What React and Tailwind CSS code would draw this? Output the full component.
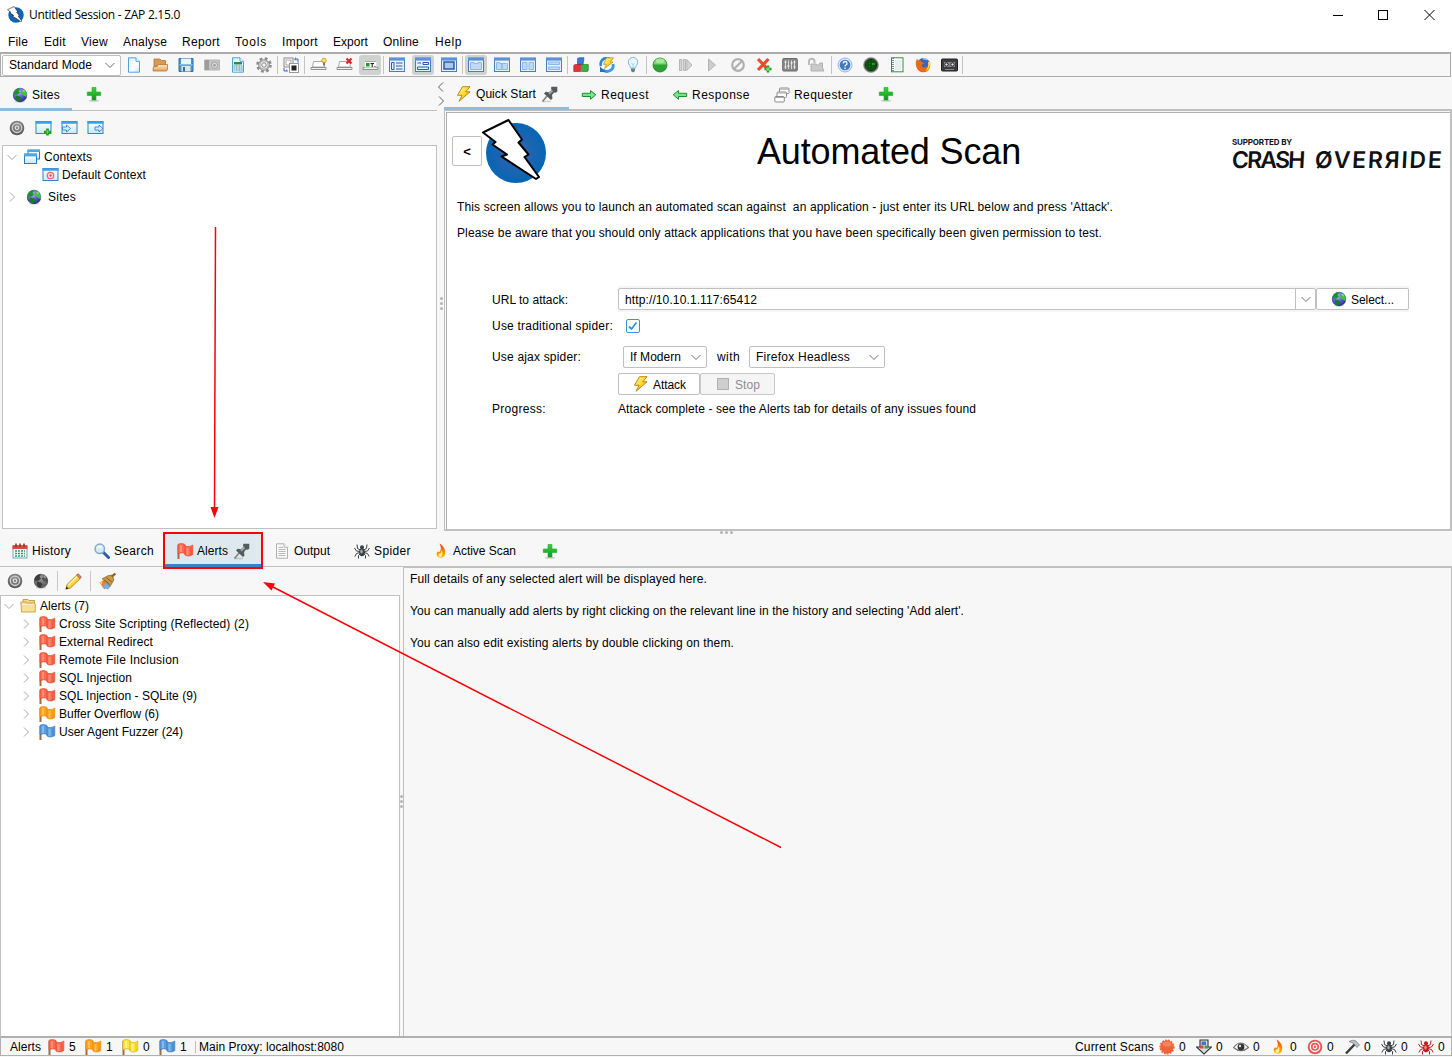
import React, { useLayoutEffect, useRef } from "react";

/* A label whose letters are spaced to fill the width in w. */
function T({ w, children, className = "" }) {
  const ref = useRef(null);
  useLayoutEffect(() => {
    const el = ref.current;
    el.style.letterSpacing = "0px";
    const natural = el.getBoundingClientRect().width;
    el.style.letterSpacing = `${(w - natural) / el.textContent.length}px`;
  }, [w, children]);
  return (
    <span ref={ref} className={"inline-block w-max shrink-0 whitespace-pre " + className}>
      {children}
    </span>
  );
}

function I({ children, className = "h-4 w-4", vb = "0 0 16 16" }) {
  return (
    <svg viewBox={vb} className={"block shrink-0 " + className} fill="none">
      {children}
    </svg>
  );
}

const Defs = () => (
  <svg className="absolute h-0 w-0">
    <defs>
      <linearGradient id="gold" x1="0" y1="0" x2="1" y2="1">
        <stop offset="0" stopColor="#fffbb0" /><stop offset=".5" stopColor="#ffd92e" /><stop offset="1" stopColor="#e69a00" />
      </linearGradient>
      <linearGradient id="green" x1="0" y1="0" x2="0" y2="1">
        <stop offset="0" stopColor="#3fd23f" /><stop offset="1" stopColor="#0d9a1c" />
      </linearGradient>
      <linearGradient id="win" x1="0" y1="0" x2="0" y2="1">
        <stop offset="0" stopColor="#ffffff" /><stop offset="1" stopColor="#cfe6f8" />
      </linearGradient>
      <linearGradient id="page" x1="0" y1="0" x2="1" y2="1">
        <stop offset="0" stopColor="#d5ecfb" /><stop offset=".6" stopColor="#ffffff" /><stop offset="1" stopColor="#c8e5f8" />
      </linearGradient>
      <linearGradient id="folder" x1="0" y1="0" x2="0" y2="1">
        <stop offset="0" stopColor="#ffe9c2" /><stop offset="1" stopColor="#e0a45c" />
      </linearGradient>
      <radialGradient id="globe" cx=".4" cy=".3" r=".75">
        <stop offset="0" stopColor="#b4b6fa" /><stop offset=".5" stopColor="#5c5ed2" /><stop offset="1" stopColor="#24248a" />
      </radialGradient>
      <radialGradient id="graydisc" cx=".5" cy=".3" r=".8">
        <stop offset="0" stopColor="#9a9a9a" /><stop offset="1" stopColor="#4c4c4c" />
      </radialGradient>
      <radialGradient id="zap" cx=".5" cy=".5" r=".5">
        <stop offset="0" stopColor="#3a62ac" /><stop offset="1" stopColor="#0666b4" />
      </radialGradient>
      <linearGradient id="flame" x1="0" y1="0" x2="0" y2="1">
        <stop offset="0" stopColor="#e8420c" /><stop offset=".6" stopColor="#ff8a00" /><stop offset="1" stopColor="#ffc400" />
      </linearGradient>
    </defs>
  </svg>
);

const ZapLogo = ({ className }) => (
  <I className={className} vb="0 0 66 66">
    <circle cx="35" cy="35" r="30" fill="url(#zap)" />
    <path d="M2 14.500 27.500 2 41 21.500 37.500 24.500 47.500 36.500 43.500 39 58 59 55 61 20.500 38.500 26 36.500 11.500 26.500 14.500 24Z" fill="#fff" stroke="#000" strokeWidth="2" strokeLinejoin="round" />
  </I>
);
const Globe = ({ gray, className }) => (
  <I className={className}>
    <ellipse cx="8" cy="14.600" rx="5" ry="1" fill="#000" opacity=".18" />
    <circle cx="8" cy="8" r="7.200" fill={gray ? "url(#graydisc)" : "url(#globe)"} />
    <path d="M2 4.500C4 1.500 6.500 1 8 1.500L6.500 4 8 5.500 5.500 7.500 3.500 8 1.200 7Z" fill={gray ? "#3c3c3c" : "#1f9426"} />
    <path d="M9.500 2 13 3.500 15 7 14.500 10 12.500 9 10 7.500 8.500 5.500 10.500 4Z" fill={gray ? "#555" : "#43c238"} />
    <path d="M4 8.500 8 9.500 9.500 11.500 7.500 14.800 5 14 4 11Z" fill={gray ? "#3c3c3c" : "#187c1c"} />
    <path d="M10 2.500 12.500 3.500 13 5.500 11 4.500Z" fill={gray ? "#bbb" : "#a4ec88"} opacity=".8" />
  </I>
);
const Plus = () => (
  <I>
    <ellipse cx="8" cy="14.700" rx="5" ry="1" fill="#000" opacity=".18" />
    <path d="M6 1.500H10V6H14.700V9.500H10V14H6V9.500H1.300V6H6Z" fill="url(#green)" stroke="#22a82b" strokeWidth=".6" />
  </I>
);
const Bolt = () => (
  <I>
    <path d="M6.500.7H14L9.800 5.800H14L3 15.300 6 9.300H1.500Z" fill="url(#gold)" stroke="#b97a05" strokeWidth=".9" strokeLinejoin="round" />
  </I>
);
const Pin = () => (
  <I className="h-[17px] w-[17px]" vb="0 0 17 17">
    <path d="M6.500 9.500 1.500 15.500" stroke="#888" strokeWidth="1.800" />
    <path d="M10.500.8 16.300.8 16.300 5.800 14.500 6.700 13 6.500 11 9 11.500 12.500 10 14 3 7.500 4.700 5.800 8 6.200 10.500 4 10 2Z" fill="#555a5c" />
    <path d="M11.500 4.500 8 7.800" stroke="#a5aaac" strokeWidth="1.800" />
    <path d="M1.500 15.500H10" stroke="#000" opacity=".15" strokeWidth="1.500" />
  </I>
);
const Arrow = ({ left }) => (
  <I className={left ? "h-4 w-4 -scale-x-100" : "h-4 w-4"}>
    <path d="M1.300 6.300H9.500V3.500L14.800 7.800 9.500 12.300V9.500H1.300Z" fill="#7fe08a" stroke="#169427" strokeWidth="1" strokeLinejoin="round" />
  </I>
);
const Stack = ({ gray }) => {
  const s = gray ? "#8b8b8b" : "#1b83c9";
  return (
    <I>
      {gray && <><rect x="5.500" y="1" width="9.500" height="5.500" rx="1" fill="#fff" stroke={s} /><rect x="3" y="5" width="9.500" height="5.500" rx="1" fill="#fff" stroke={s} /><rect x=".8" y="9.500" width="9.500" height="5.500" rx="1" fill="#fff" stroke={s} /><path d="M6 2.200H15M3.500 6H12M1 10.500H10" stroke="#aaa" /></>}
      {!gray && <><rect x="4" y="1" width="11.500" height="9" fill="url(#win)" stroke={s} /><path d="M3.500 2H16" stroke="#46a9e8" strokeWidth="2" /><rect x=".5" y="5" width="12" height="9.500" fill="url(#win)" stroke={s} /><path d="M0 6.200H13" stroke="#46a9e8" strokeWidth="2.400" /></>}
    </I>
  );
};
const Win = ({ kind }) => (
  <I className="h-4 w-[17px]" vb="0 0 17 16">
    <rect x="1" y="1.500" width="15" height="12" fill="url(#win)" stroke="#2989cb" />
    <path d="M.5 2.500H16.500" stroke="#3da0e2" strokeWidth="2.500" />
    {kind === "add" && <><path d="M12.500 8.500V15.500M9 12H16" stroke="#149a20" strokeWidth="2.600" /><path d="M12.500 10V14M10.500 12H14.500" stroke="#6fe070" strokeWidth=".8" /></>}
    {kind === "in" && <path d="M1.500 7H5.500V5L9.500 8.500 5.500 12V10H1.500Z" fill="#d8efff" stroke="#2989cb" strokeWidth=".9" />}
    {kind === "out" && <path d="M8 7H12V5L15.800 8.500 12 12V10H8Z" fill="#d8efff" stroke="#2989cb" strokeWidth=".9" />}
    {kind === "target" && <><circle cx="8.500" cy="8.500" r="3.200" stroke="#f26a6a" strokeWidth="1.300" fill="#ffe5e5" /><circle cx="8.500" cy="8.500" r="1.200" fill="#f04e4e" /></>}
  </I>
);
const Target = ({ red }) => (
  <I>
    <circle cx="8" cy="8" r="7.300" fill={red ? "#e85a5a" : "url(#graydisc)"} />
    <circle cx="8" cy="7.800" r="4.700" stroke={red ? "#fff" : "#d0d0d0"} strokeWidth="1.300" />
    <circle cx="8" cy="7.800" r="1.800" stroke={red ? "#fff" : "#dedede"} strokeWidth="1.200" />
  </I>
);
const flagColors = {
  red: ["#ff6a50", "#dd3a22", "#ff9e88"],
  orange: ["#ffa51a", "#dd7d00", "#ffcb70"],
  yellow: ["#ffe63d", "#c9a600", "#fff7a0"],
  blue: ["#5c9ede", "#2b6cb4", "#96c5f0"],
};
const Flag = ({ c }) => {
  const [a, b, h] = flagColors[c];
  return (
    <I className="h-[17px] w-[17px]" vb="0 0 17 17">
      <path d="M1.500 2V16" stroke="#a06c40" strokeWidth="2" />
      <path d="M1 1.300C3.500.3 5.500.3 8 1.500V3C10.500 4 13 3.800 15.800 2V11.500C13 13.500 10 13.300 8 12V10.500C5.500 9.500 3.500 9.700 1 10.800Z" fill={a} stroke={b} strokeWidth=".6" />
      <path d="M4 2V9M10.500 5V12" stroke={h} strokeWidth="2" opacity=".7" />
      <path d="M8 2V11.500M14 4V12" stroke={b} strokeWidth="1" opacity=".6" />
    </I>
  );
};
const Spider = ({ red }) => {
  const s = red ? "#bf1d1d" : "#3a4045";
  return (
    <I>
      <path d="M6.500 7 3.500 5.500 3 1.500M6 8.500 2.500 8 .5 5M6 9.500 2.500 10.500.8 13.500M6.500 10.500 4.500 12.500 4.500 15.500M9.500 7 12.500 5.500 13 1.500M10 8.500 13.500 8 15.500 5M10 9.500 13.500 10.500 15.200 13.500M9.500 10.500 11.500 12.500 11.500 15.500" stroke={s} strokeWidth="1" />
      <circle cx="8" cy="4.200" r="2" fill={s} />
      <ellipse cx="8" cy="9.300" rx="2.800" ry="4" fill={s} />
      <ellipse cx="7.500" cy="8.500" rx="1.200" ry="2" fill={red ? "#ff8b8b" : "#a4aeb4"} />
    </I>
  );
};
const Flame = () => (
  <I>
    <path d="M6.500.5C11 3 13 7 12 11.500 11 15.500 5 16 3.800 12 3 9 5.500 7.500 6.500 9 8.500 7 8 3.500 6.500.5Z" fill="url(#flame)" />
    <path d="M8.800 7C10 10 9.500 13.500 7.500 14 5.500 14 5 11.800 6 10.500 7.500 11 8.500 9 8.800 7Z" fill="#fff3a0" />
  </I>
);
const Page = ({ kind }) => {
  const s = kind === "text" ? "#b0b0b0" : "#4ea4d8";
  return (
    <I>
      <path d="M2.500.8H10L13.500 4.300V15.200H2.500Z" fill={kind === "text" ? "#fafafa" : "url(#page)"} stroke={s} />
      <path d="M10 .8V4.300H13.500" fill="#fff" stroke={s} />
      {kind === "text" && <path d="M4.500 4.500H9M4.500 6.500H11.500M4.500 8.500H11.500M4.500 10.500H11.500M4.500 12.500H11.500" stroke="#b7b7b7" />}
      {kind === "report" && <><rect x="4" y="5" width="8" height="2.500" fill="#149a48" /><path d="M4 9H12M4 11H12M4 13H12M6.700 8V14M9.300 8V14M4 8V14M12 8V14" stroke="#7fa8b8" strokeWidth=".8" /></>}
    </I>
  );
};
const Layout = ({ kind }) => (
  <I>
    <rect x=".5" y="1" width="15" height="13.500" fill="#e6f0fb" stroke="#4a7cc0" />
    <path d="M0 2.300H16" stroke="#5a93d8" strokeWidth="2.600" />
    {kind === 1 && <path d="M2.500 5.500H5V12.500H2.500ZM7 6H13.500M7 9H13.500M7 12H13.500" stroke="#2a5da8" />}
    {kind === 2 && <path d="M2.500 10H13.500V12.500H2.500ZM2.500 6H6M8 5.500H13.500V7.500H8Z" stroke="#2a5da8" />}
    {kind === 3 && <rect x="3" y="5" width="10" height="7" fill="#a8caf2" stroke="#24529c" strokeWidth="1.400" />}
    {kind === 4 && <path d="M2.500 12.500V5.500H6V6.500H10V5.500H13.500V12.500Z" fill="#bcdaf8" stroke="#8db7e8" />}
    {kind === 5 && <path d="M2.500 12.500V5.500H5.500V6.500H8V12.500ZM8 12.500V6.500H13.500V12.500Z" fill="#bcdaf8" stroke="#8db7e8" />}
    {kind === 6 && <path d="M2.500 5.500H7V12.500H2.500ZM9 5.500H13.500V12.500H9Z" fill="#bcdaf8" stroke="#8db7e8" />}
    {kind === 7 && <path d="M2.500 5H13.500V7.500H2.500ZM2.500 10H13.500V12.500H2.500Z" fill="#bcdaf8" stroke="#8db7e8" />}
  </I>
);
const Tray = ({ children }) => (
  <I className="h-4 w-[17px]" vb="0 0 17 16">
    <path d="M3.500 4.500H13.500L14.500 10H2.500Z" fill="#fff" stroke="#aaa" />
    <path d="M1 10.500H16V12.500H1Z" fill="#eee" stroke="#888" strokeWidth=".9" />
    {children}
  </I>
);

const G = {
  open: <I><path d="M2 2H8L9.500 3.500H13.500V9H2Z" fill="#d59a55" stroke="#b27432" strokeWidth=".8" /><path d="M1 13.500 1.500 9.500H5L6.500 7.500H15.500V12.500L14.500 14H1Z" fill="url(#folder)" stroke="#b27432" strokeWidth=".8" /></I>,
  save: <I><path d="M1 1.500H15V14.500H1Z" fill="#4d96d4" stroke="#2d6fae" /><path d="M3 1.500H13V7H3Z" fill="#e9f5fd" /><path d="M3.500 9H12.500V14.500H3.500Z" fill="#dde5ea" /><path d="M5 10H7V14.500H5Z" fill="#336b9e" /><path d="M1.500 7.800H14.500" stroke="#a3cef2" /></I>,
  camera: <I><path d="M.5 3H15.500V13H.5Z" fill="#c4c4c4" stroke="#b4b4b4" /><path d="M1 3H5V13H1Z" fill="#9c9c9c" /><circle cx="10.500" cy="8.200" r="3.200" fill="#d7d7d7" stroke="#a4a4a4" /><circle cx="10.500" cy="8.200" r="1.200" fill="#999" /></I>,
  gear: <I><circle cx="8" cy="8" r="6.500" stroke="#8b8b8b" strokeWidth="2.600" strokeDasharray="2.700 2.400" /><circle cx="8" cy="8" r="4.800" stroke="#888" strokeWidth="2" fill="#ededed" /><circle cx="8" cy="8" r="4.700" stroke="#d4d4d4" strokeWidth=".8" /><circle cx="8" cy="8" r="2.200" stroke="#888" fill="#f8f8f8" /></I>,
  swap: <I><rect x="1" y="1" width="9" height="9" fill="#fff" stroke="#888" /><rect x="3" y="3" width="5" height="5" stroke="#aaa" /><rect x="6.500" y="6.500" width="9" height="9" fill="#fff" stroke="#999" /><rect x="8.500" y="8.500" width="5" height="5" fill="#222" /><path d="M12 2H15V5.500M11.500 2 13 .8M11.500 2 13 3.500" stroke="#3d5ce0" /><path d="M1 11V14H4.500M4.500 14 3 12.700" stroke="#3d5ce0" /></I>,
  trayBulb: <Tray><circle cx="14" cy="3.500" r="2.300" fill="#ffe15a" stroke="#b88d18" strokeWidth=".7" /><path d="M14 5.500V8.500" stroke="#6b6040" strokeWidth="1.500" /></Tray>,
  trayX: <Tray><path d="M10.500 1.500 15.500 6.500M15.500 1.500 10.500 6.500" stroke="#d9262b" strokeWidth="2.200" /></Tray>,
  trayT: <Tray><rect x="2.500" y="5" width="12" height="5.500" fill="#fff" /><rect x="4" y="6" width="3.500" height="3.500" fill="#17a51f" /><path d="M8.500 6.500H12M10.200 6.500V10M12.500 9.500H13.500" stroke="#222" strokeWidth="1.100" /></Tray>,
  blocks: <I><path d="M4.500 1.500 6 .7H11L10 8H4.500Z" fill="#3b78dc" stroke="#1c4ea5" strokeWidth=".6" /><path d="M.8 8.500 2 7.500H7.500V14.500H.8Z" fill="#e23434" stroke="#a31616" strokeWidth=".6" /><path d="M8.500 8.500 9.500 7.500H15.300V13.500L14.500 14.500H8.500Z" fill="#37b23a" stroke="#177a1a" strokeWidth=".6" /></I>,
  update: <I><path d="M2 9A6 6 0 0 1 12.500 3.500" stroke="#2d86cc" strokeWidth="2.600" /><path d="M14 7A6 6 0 0 1 4 12.700" stroke="#3b9ade" strokeWidth="2.800" /><path d="M1 9.500V15H7Z" fill="#2573b8" /><path d="M7.500.8H14.500L11 5H14L5.500 11.500 7.500 7.300H4.500Z" fill="url(#gold)" stroke="#bd870d" strokeWidth=".7" /></I>,
  bulb: <I><path d="M5.500 11C5.500 8.500 3.300 8 3.300 5A4.700 4.700 0 0 1 12.700 5C12.700 8 10.500 8.500 10.500 11Z" fill="#e8f5ff" stroke="#7db8e8" /><path d="M6.500 6 8 8 9.500 6M8 8V11" stroke="#9bcbed" strokeWidth=".8" /><path d="M6 11.500H10V14L8 15.500 6 14Z" fill="#777" /></I>,
  ball: <I><circle cx="8" cy="8" r="7" fill="#2da235" stroke="#14841e" strokeWidth=".8" /><path d="M1.500 7.500A6.500 6.500 0 0 1 14.500 7.500Z" fill="#76d36e" /><ellipse cx="8" cy="4" rx="4.500" ry="2.300" fill="#a6e89a" /></I>,
  step: <I><path d="M1.500 2.500H3.700V13.500H1.500ZM5.300 2.500H7.500V13.500H5.300ZM8.800 2.500 14 8 8.800 13.500Z" fill="#d4d4d4" stroke="#aaa" strokeWidth=".8" /></I>,
  play: <I><path d="M4.500 2 11.500 8 4.500 14Z" fill="#ccc" stroke="#aaa" strokeWidth=".8" /></I>,
  ban: <I><circle cx="8" cy="8" r="5.800" stroke="#b0b0b0" strokeWidth="2.200" /><path d="M12 4 4 12" stroke="#b0b0b0" strokeWidth="2.200" /></I>,
  xadd: <I><path d="M2 2 12.500 13M12.500 2 2 13" stroke="#f04a2e" strokeWidth="3.200" /><path d="M12 8.500V15.500M8.500 12H15.500" stroke="#149a20" strokeWidth="2.600" /><path d="M12 9.800V14.200M9.800 12H14.200" stroke="#8ff58a" strokeWidth="1" /></I>,
  mixer: <I><rect x=".7" y="1.500" width="14.600" height="12.500" rx="1" fill="#888" stroke="#6a6a6a" /><path d="M3.500 3.500V12M6.500 3.500V12M9.500 3.500V12M12.500 3.500V12" stroke="#eee" strokeWidth=".8" /><path d="M2.500 5H4.500M5.500 9H7.500M8.500 6H10.500M11.500 10H13.500M2.500 10H4.500M11.500 5H13.500" stroke="#fff" /></I>,
  lock: <I className="h-4 w-[18px]" vb="0 0 18 16"><path d="M2 8V4.500A2.500 2.500 0 0 1 7.500 4.500V6" stroke="#bbb" strokeWidth="2" /><path d="M4 7H9L11 8.500 13 6H15.500V11L17 14H4Z" fill="#cacaca" stroke="#b0b0b0" /></I>,
  help: <I><circle cx="8" cy="8" r="7" fill="#dce9f8" stroke="#8ba6c8" strokeWidth=".8" /><circle cx="8" cy="8" r="5.300" fill="#4078c4" /><path d="M6.200 6.500A1.900 1.900 0 1 1 8.700 8.200Q8 8.500 8 9.500M8 10.500V12" stroke="#fff" strokeWidth="1.300" /></I>,
  radar: <I><circle cx="8" cy="8" r="7.500" fill="#666" stroke="#999" strokeWidth=".6" /><circle cx="8" cy="8" r="5.500" fill="#087014" stroke="#032d07" /><path d="M8 3V13M3 8H13M5 5H11V11H5Z" stroke="#033d08" strokeWidth=".8" /><path d="M9 7H12" stroke="#49d84e" /></I>,
  note: <I><rect x="2.500" y=".8" width="11.500" height="14" fill="#fff" stroke="#2e8f46" /><path d="M4 1V14.500" stroke="#888" strokeWidth="2" strokeDasharray="1 1" /><path d="M6 4H12.500M6 6H12.500M6 8H12.500M6 10H12.500M6 12H12.500" stroke="#b8d2da" strokeWidth=".7" /></I>,
  firefox: <I><circle cx="8.500" cy="7.500" r="6.500" fill="#3565bd" /><path d="M.8 5C.5 12 4 15.500 9 15.300 14 15 16 10 15 4.500 14 8 13 10 10 10.500 7.500 11 6 9 7 7.500L9.500 6.500 7 5 5.500 3.500 3 3.500 2 1.500Z" fill="#e86a12" /><path d="M15 4.500C15.500 9 14 13 10.500 14 14 10 13 7 13 5Z" fill="#ffd83b" /><path d="M8 2Q11 1 12.500 3" stroke="#9fd2ff" strokeWidth="1.500" /></I>,
  tape: <I className="h-4 w-[17px]" vb="0 0 17 16"><rect x=".5" y="2" width="16" height="12" rx="1" fill="#3b3d40" stroke="#222" /><rect x="3" y="5" width="11" height="5" fill="#858585" /><circle cx="5.500" cy="7.500" r="1.600" fill="#eee" stroke="#222" /><circle cx="11.500" cy="7.500" r="1.600" fill="#eee" stroke="#222" /><path d="M4 12.500H13" stroke="#888" /></I>,
};

const Calendar = () => <I><rect x="1" y="2.500" width="14" height="12.500" fill="#f5faff" stroke="#7ea3b8" /><path d="M.5 2.500H15.500V6H.5Z" fill="#dc4a35" /><path d="M4 .5V4M8 .5V4M12 .5V4" stroke="#8b3020" strokeWidth="1.500" /><path d="M3 8H13M3 10.500H13M3 13H13" stroke="#2f9e67" strokeWidth="1.500" strokeDasharray="2 1" /></I>;
const Magnifier = () => <I><path d="M9 9 14.500 14.500" stroke="#2c62a5" strokeWidth="3" strokeLinecap="round" /><circle cx="5.800" cy="5.800" r="4.700" fill="#d3ecfa" stroke="#88a8c4" strokeWidth="1.500" /><path d="M3.500 5Q5 2.800 7.500 4" stroke="#fff" strokeWidth="1.500" /></I>;
const Pencil = () => <I className="h-[17px] w-[17px]"><path d="M.8 15.200 2 10.800 11 2 14.300 5.200 5.200 14Z" fill="#ffd53d" stroke="#a97808" strokeWidth=".8" /><path d="M3 11.500 11.500 3.200" stroke="#fff2a0" strokeWidth="1.500" /><path d="M11 2 12.500.7 15.300 3.700 14.300 5.200Z" fill="#ee8a80" stroke="#974438" strokeWidth=".7" /><path d="M.7 15.300 1.500 12.700 3.300 14.500Z" fill="#222" /></I>;
const Broom = () => <I className="h-[17px] w-[17px]"><path d="M.5 9 5 6.500 8 12 5 15.500Z" fill="#f07a3c" /><path d="M3 13.500 7 9.500 11 12.500 8.500 15.500Z" fill="#6eb1e8" /><path d="M3 5.500 8.500 2.500 12.500 2 14 6.500 10.500 12.500Z" fill="#c99a4a" stroke="#85602a" strokeWidth=".7" /><path d="M12 3.500 15.500.5" stroke="#94622c" strokeWidth="2.200" /><path d="M5 6.500 10 10.500M7 4.500 12 8.500" stroke="#744e1d" strokeWidth=".8" /><path d="M.5 9 3 8 3 11Z" fill="#ffd13b" /></I>;
const Folder = () => <I><path d="M3 4V1.500H8L9 2.500H14.500V6" fill="#f4d979" stroke="#b89136" strokeWidth=".8" /><path d="M.8 4H6L7 5H14L15.300 6V14H1.500Z" fill="#f8df94" stroke="#bd9840" strokeWidth=".8" /><path d="M2 6.500H14" stroke="#fff5c9" /></I>;
const Burst = () => <I><circle cx="8" cy="8" r="6.500" fill="#f4623c" stroke="#f4623c" strokeWidth="2.200" strokeDasharray="1.700 1.100" /><circle cx="8" cy="8" r="6.500" fill="#f4623c" /><ellipse cx="8" cy="5" rx="4.500" ry="2.500" fill="#ff9a7a" opacity=".6" /></I>;
const Down = () => <I><path d="M4 1H12V8H15.500L8 15 .5 8H4Z" fill="#d8dbdd" stroke="#333" strokeWidth="1.100" /><path d="M5.500 2.500H10V6H5.500Z" fill="#3b75d2" /><path d="M4 6.500H7.500V9.500H4Z" fill="#e14343" /><path d="M8.500 6.500H12V9.500H8.500Z" fill="#32a83b" /></I>;
const Eye = () => <I><path d="M.5 8.500Q7.500-.5 15.500 8.500 8 15 .5 8.500Z" fill="#f5f5f5" stroke="#777" strokeWidth="1.200" /><circle cx="8" cy="8" r="3.400" fill="#333" /><circle cx="7" cy="7" r="1.200" fill="#dde" /></I>;
const Hammer = () => <I><path d="M11 5 2 14.500" stroke="#3b3b3b" strokeWidth="2.500" /><path d="M5 2.500Q9 .2 12 2L15.500 6 13 8.500 10.500 5.500Q8 3.500 5 2.500Z" fill="#b9bfc2" stroke="#788083" strokeWidth=".7" /></I>;

const Chevron = ({ open, className = "" }) => (
  <svg viewBox="0 0 12 12" className={"h-3 w-3 shrink-0 " + className} fill="none">
    <path d={open ? "M1.500 4 6 8.500 10.500 4" : "M4 1.500 8.500 6 4 10.500"} stroke="currentColor" />
  </svg>
);

const toolbar = [
  <Page />, G.open, G.save, G.camera, <Page kind="report" />, G.gear, "|", G.swap, "|",
  G.trayBulb, G.trayX, [G.trayT], "|", <Layout kind={1} />, [<Layout kind={2} />], <Layout kind={3} />, "|",
  [<Layout kind={4} />], <Layout kind={5} />, <Layout kind={6} />, <Layout kind={7} />, "|", G.blocks, G.update, G.bulb, "|",
  G.ball, G.step, G.play, G.ban, G.xadd, G.mixer, G.lock, "gap", "|", G.help, G.radar, G.note, G.firefox, G.tape, "|",
];

const menus = [
  ["File", 20, "w-[36px]"], ["Edit", 22, "w-[37px]"], ["View", 27, "w-[42px]"], ["Analyse", 44, "w-[59px]"],
  ["Report", 38, "w-[53px]"], ["Tools", 32, "w-[47px]"], ["Import", 36, "w-[51px]"], ["Export", 35, "w-[50px]"],
  ["Online", 36, "w-[52px]"], ["Help", 27, "w-[42px]"],
];

const alerts = [
  ["red", "Cross Site Scripting (Reflected) (2)", 190], ["red", "External Redirect", 94], ["red", "Remote File Inclusion", 120],
  ["red", "SQL Injection", 73], ["red", "SQL Injection - SQLite (9)", 138], ["orange", "Buffer Overflow (6)", 100],
  ["blue", "User Agent Fuzzer (24)", 124],
];

function Tab({ className, icon, label, w, gap = "ml-1", pin }) {
  return (
    <div className={"flex h-full shrink-0 items-center pt-[3px] " + className}>
      {icon}
      <T w={w} className={gap}>{label}</T>
      {pin && <div className="ml-[5px]"><Pin /></div>}
    </div>
  );
}

const Combo = ({ className, label, w }) => (
  <div className={"flex items-center justify-between rounded-[2px] border border-[#c0c0c0] bg-white pl-[6px] pr-1 " + className}>
    <T w={w}>{label}</T>
    <Chevron open className="text-[#707070]" />
  </div>
);

function SitesPane() {
  return (
    <section className="flex w-[437px] shrink-0 flex-col">
      <div className="flex h-[34px] items-center border-b border-[#c0c0c0]">
        <div className="-mb-px flex h-[34px] w-[72px] items-center border-b-[3px] border-[#8ebbdf] pl-3 pt-1">
          <Globe /><T w={28} className="ml-1">Sites</T>
        </div>
        <div className="ml-[14px]"><Plus /></div>
      </div>
      <div className="flex h-[34px] items-center gap-[10px] pl-[9px]">
        <Target /><div className="flex gap-[9px]"><Win kind="add" /><Win kind="in" /><Win kind="out" /></div>
      </div>
      <div className="ml-[2px] h-[384px] border border-[#c0c0c0] bg-white pt-[2px]">
        <div className="flex h-[18px] items-center pl-[3px]">
          <Chevron open className="text-[#a8a8a8]" /><div className="ml-[6px]"><Stack /></div><T w={48} className="ml-1">Contexts</T>
        </div>
        <div className="flex h-[18px] items-center pl-[39px]"><Win kind="target" /><T w={84} className="ml-[3px]">Default Context</T></div>
        <div className="flex h-[26px] items-center pl-[3px]">
          <Chevron className="text-[#a8a8a8]" /><div className="ml-[8px]"><Globe /></div><T w={28} className="ml-[6px]">Sites</T>
        </div>
      </div>
    </section>
  );
}

function QuickStart() {
  return (
    <section className="flex w-[1008px] shrink-0 flex-col">
      <div className="flex h-[34px] items-center border-b-2 border-[#c0c0c0]">
        <Tab className="mt-[2px] w-[125px] border-b-[3px] border-[#8ebbdf] pl-3" icon={<Bolt />} label="Quick Start" w={60} pin />
        <Tab className="w-[91px] pl-3" icon={<Arrow />} label="Request" w={48} />
        <Tab className="w-[102px] pl-3" icon={<Arrow left />} label="Response" w={58} />
        <Tab className="w-[104px] pl-3" icon={<Stack gray />} label="Requester" w={59} />
        <div className="ml-[12px] pt-[2px]"><Plus /></div>
      </div>
      <div className="h-[420px] border-b-2 border-l border-r-2 border-[#c0c0c0] bg-[#f7f7f7] pl-px pt-px">
        <div className="h-full border-l border-t border-[#b0b0b0] bg-white">
          <div className="flex h-[79px] pl-[5px]">
            <div className="mt-[23px] flex h-[30px] w-[30px] items-center justify-center rounded-[2px] border border-[#c0c0c0] pt-px text-[13px] font-bold"><span>&lt;</span></div>
            <div className="-ml-px mt-[5px]"><ZapLogo className="h-[66px] w-[66px]" /></div>
            <div className="ml-[210px] mt-[19px] w-[264px] text-[36px] leading-[40px]"><T w={264}>Automated Scan</T></div>
            <div className="ml-[211px] mt-[25px] font-['Inter'] text-[#111]">
              <div className="h-[9px] text-[8px] font-bold leading-[9px]"><T w={60}>SUPPORTED BY</T></div>
              <div className="h-[24px] text-[23px] leading-[26px]"><T w={73} className="-skew-x-3 font-semibold">CRASH</T><T w={130} className="ml-[11px] -skew-x-3 font-semibold">ØVERЯIDE</T></div>
            </div>
          </div>
          <div className="flex flex-col gap-[8px] pl-[10px] pt-[6px]">
            <T w={656}>This screen allows you to launch an automated scan against  an application - just enter its URL below and press 'Attack'.</T>
            <T w={645}>Please be aware that you should only attack applications that you have been specifically been given permission to test.</T>
          </div>
          <div className="mt-[44px] pl-[45px]">
            <div className="flex h-[26px] items-center">
              <div className="w-[126px] pt-px"><T w={76}>URL to attack:</T></div>
              <div className="flex h-[26px] items-center bg-[#f5f5f5]">
                <div className="flex h-[22px] w-[698px] items-center rounded-[2px] border border-[#c0c0c0] bg-white pl-[6px]">
                  <T w={132} className="pt-px">http://10.10.1.117:65412</T>
                  <div className="ml-auto flex h-full w-5 items-center justify-center border-l border-[#c0c0c0]"><Chevron open className="text-[#707070]" /></div>
                </div>
                <div className="flex h-[22px] w-[93px] items-center rounded-[2px] border border-[#c0c0c0] bg-white pl-[14px]"><Globe /><T w={43} className="ml-1 pt-px">Select...</T></div>
              </div>
            </div>
            <div className="flex h-[27px] items-center">
              <div className="w-[134px] pt-px"><T w={121}>Use traditional spider:</T></div>
              <div className="flex h-[14px] w-[14px] items-center justify-center rounded-[2px] border border-[#3592e0] bg-white">
                <I className="h-[12px] w-[12px]" vb="0 0 12 12"><path d="M2 6.500 4.500 9 9.500 2.500" stroke="#3592e0" strokeWidth="1.800" /></I>
              </div>
            </div>
            <div className="flex h-[34px] items-center pt-px">
              <div className="w-[131px] pt-px"><T w={89}>Use ajax spider:</T></div>
              <Combo className="h-[22px] w-[84px]" label="If Modern" w={51} />
              <T w={23} className="ml-[10px]">with</T>
              <Combo className="ml-[9px] h-[22px] w-[136px]" label="Firefox Headless" w={94} />
            </div>
            <div className="flex h-[22px] items-center pl-[126px]">
              <div className="flex h-[22px] w-[82px] items-center rounded-[2px] border border-[#c0c0c0] bg-white pl-[14px]"><Bolt /><T w={33} className="ml-1 pt-px">Attack</T></div>
              <div className="flex h-[22px] w-[75px] items-center rounded-[2px] border border-[#c8c8c8] bg-[#f5f5f5] pl-[16px] text-[#8c8c8c]">
                <div className="h-3 w-3 border border-[#b0b0b0] bg-[#cecece]" /><T w={25} className="ml-[6px] pt-px">Stop</T>
              </div>
            </div>
            <div className="mt-[5px] flex items-center"><div className="w-[126px]"><T w={54}>Progress:</T></div><T w={358}>Attack complete - see the Alerts tab for details of any issues found</T></div>
          </div>
        </div>
      </div>
    </section>
  );
}

const Dots = ({ vertical }) => (
  <div className={"flex gap-[2px] " + (vertical ? "flex-col" : "")}>
    {[0, 1, 2].map((i) => <div key={i} className="h-[3px] w-[3px] rounded-full bg-[#b4b4b4]" />)}
  </div>
);

function AlertsPane() {
  return (
    <>
      <div className="flex h-[35px] shrink-0 items-center border-b border-[#c0c0c0]">
        <Tab className="w-[82px] pl-3" icon={<Calendar />} label="History" w={39} />
        <Tab className="w-[81px] pl-3" icon={<Magnifier />} label="Search" w={40} />
        <div className="h-[37px] w-[100px] shrink-0 self-start border-2 border-[#fb0007] bg-[#dde9ee]">
          <div className="flex h-full items-center border-b-[3px] border-[#3a80c4] pl-3 pt-1">
            <Flag c="red" /><T w={31} className="ml-[3px]">Alerts</T><div className="ml-[5px]"><Pin /></div>
          </div>
        </div>
        <Tab className="w-[79px] pl-[11px]" icon={<Page kind="text" />} label="Output" w={36} />
        <Tab className="w-[83px] pl-3" icon={<Spider />} label="Spider" w={37} />
        <Tab className="w-[104px] pl-2" icon={<Flame />} label="Active Scan" w={63} />
        <div className="ml-[13px] pt-[3px]"><Plus /></div>
      </div>
      <div className="flex h-[469px] shrink-0">
        <div className="flex w-[400px] shrink-0 flex-col">
          <div className="flex h-[28px] items-center pl-[7px]">
            <Target /><div className="ml-[10px]"><Globe gray /></div>
            <div className="ml-[8px] h-5 w-px bg-[#c8c8c8]" /><div className="ml-[7px]"><Pencil /></div>
            <div className="ml-[8px] h-5 w-px bg-[#c8c8c8]" /><div className="ml-[8px]"><Broom /></div>
          </div>
          <div className="flex-1 border border-b-0 border-[#c0c0c0] bg-white pt-px">
            <div className="flex h-[18px] items-center pl-[2px]"><Chevron open className="text-[#a8a8a8]" /><div className="ml-[5px]"><Folder /></div><T w={49} className="ml-[4px]">Alerts (7)</T></div>
            {alerts.map(([c, label, w]) => (
              <div key={label} className="flex h-[18px] items-center pl-[19px]"><Chevron className="text-[#a8a8a8]" /><div className="ml-[7px]"><Flag c={c} /></div><T w={w} className="ml-[3px]">{label}</T></div>
            ))}
          </div>
        </div>
        <div className="flex w-[3px] items-center justify-center"><Dots vertical /></div>
        <div className="flex flex-1 flex-col items-start gap-[14px] border-l border-r border-t border-[#c0c0c0] pl-[6px] pt-[2px]">
          <T w={297}>Full details of any selected alert will be displayed here.</T>
          <T w={554}>You can manually add alerts by right clicking on the relevant line in the history and selecting 'Add alert'.</T>
          <T w={324}>You can also edit existing alerts by double clicking on them.</T>
        </div>
      </div>
    </>
  );
}

function StatusBar() {
  const scans = [<Burst />, <Down />, <Eye />, <Flame />, <Target red />, <Hammer />, <Spider />, <Spider red />];
  return (
    <footer className="flex h-[20px] shrink-0 items-center border border-t-2 border-[#b0b0b0] pl-[9px] pt-px">
      <T w={31}>Alerts</T>
      <div className="ml-[7px] flex">
        {[["red", 5], ["orange", 1], ["yellow", 0], ["blue", 1]].map(([c, n]) => (
          <div key={c} className="flex w-[37px] items-center"><Flag c={c} /><span className="ml-[4px]">{n}</span></div>
        ))}
      </div>
      <div className="-ml-px h-3 w-px bg-[#c0c0c0]" />
      <T w={145} className="ml-[3px]">Main Proxy: localhost:8080</T>
      <T w={79} className="ml-auto">Current Scans</T>
      <div className="-mr-[4px] ml-[5px] flex">
        {scans.map((s, i) => <div key={i} className="flex w-[37px] items-center">{s}<span className="ml-[4px]">0</span></div>)}
      </div>
    </footer>
  );
}

export default function App() {
  return (
    <div className="relative flex h-[1057px] w-[1452px] flex-col overflow-hidden bg-[#f7f7f7] font-['Liberation_Sans',Arial,sans-serif] text-[12px] leading-[18px] text-black">
      <Defs />
      <div className="flex h-[29px] shrink-0 items-center bg-white pl-[7px]">
        <ZapLogo className="h-[17px] w-[17px]" />
        <T w={151} className="ml-[5px] font-['Open_Sans',sans-serif]">Untitled Session - ZAP 2.15.0</T>
        <svg viewBox="0 0 102 12" className="ml-auto mr-[17px] h-3 w-[102px]" fill="none" stroke="#000">
          <path d="M0 6.500H10M91.500 1 101.500 11M101.500 1 91.500 11" /><rect x="45.500" y="1.500" width="9" height="9" />
        </svg>
      </div>
      <nav className="flex h-[23px] shrink-0 items-center bg-white pl-[8px] pt-[3px]">
        {menus.map(([m, w, c]) => <div key={m} className={c}><T w={w}>{m}</T></div>)}
      </nav>
      <div className="flex h-[25px] w-[1451px] shrink-0 items-center border border-t-2 border-[#acacac] pl-px">
        <Combo className="h-[21px] w-[119px]" label="Standard Mode" w={83} />
        {toolbar.map((t, i) =>
          t === "|" ? <div key={i} className="h-[18px] w-px bg-[#c4c4c4]" /> :
          t === "gap" ? <div key={i} className="w-[2px]" /> :
          <div key={i} className="flex h-[20px] w-[26px] shrink-0 items-center justify-center">
            {Array.isArray(t) ? <div className="flex h-[20px] w-[22px] items-center justify-center rounded-[3px] bg-[#cfd3d0]">{t[0]}</div> : t}
          </div>
        )}
      </div>
      <main className="flex h-[455px] shrink-0">
        <SitesPane />
        <div className="flex w-[7px] shrink-0 flex-col items-center pl-px">
          <div className="mt-[4px] flex flex-col gap-[2px]">
            <Chevron className="-scale-x-100 text-[#606060]" /><Chevron className="text-[#606060]" />
          </div>
          <div className="mt-[190px]"><Dots vertical /></div>
        </div>
        <QuickStart />
      </main>
      <div className="-mt-px mb-px flex h-0 justify-center"><Dots /></div>
      <AlertsPane />
      <StatusBar />
      <svg viewBox="0 0 1452 1057" className="pointer-events-none absolute inset-0 h-full w-full" stroke="#fb0007" strokeWidth="1.500" fill="#fb0007">
        <path d="M215.500 227 214.500 508M781 847.500 272 586.500" />
        <path d="M214.500 518 210.500 507H218.500ZM263 582 275 583.500 271.500 590.500Z" stroke="none" />
      </svg>
    </div>
  );
}
